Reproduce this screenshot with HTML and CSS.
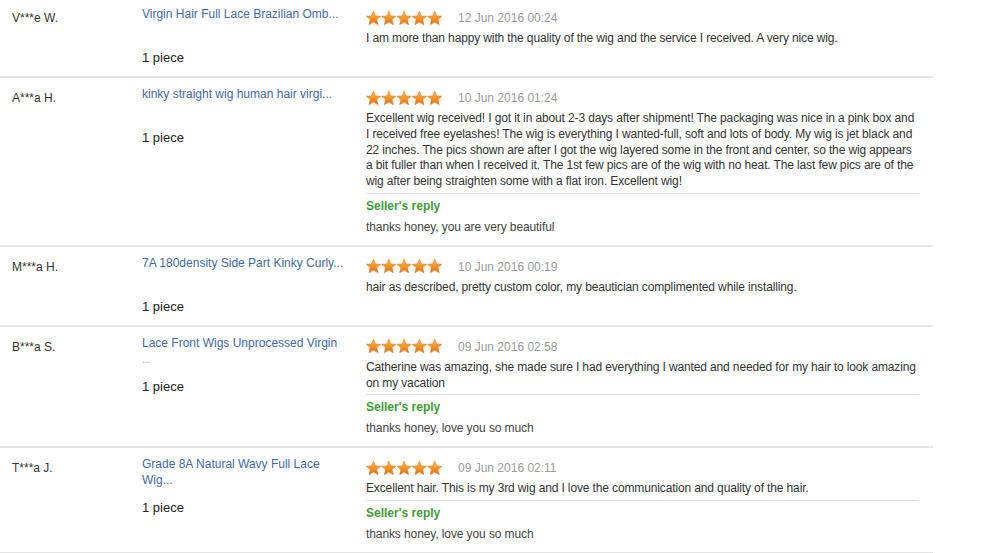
FILE: index.html
```html
<!DOCTYPE html>
<html>
<head>
<meta charset="utf-8">
<link rel="stylesheet" href="styles.css">
</head>
<body>
<svg class="defs" width="0" height="0" aria-hidden="true">
  <defs>
    <linearGradient id="sg" x1="0" y1="0" x2="0" y2="1">
      <stop offset="0" stop-color="#fdbb4e"/>
      <stop offset="0.55" stop-color="#f39227"/>
      <stop offset="1" stop-color="#e26c0e"/>
    </linearGradient>
    <polygon id="star" points="7.5,0 9.55,4.9 14.75,5.25 10.75,8.6 12,13.8 7.5,11.0 3,13.8 4.25,8.6 0.25,5.25 5.45,4.9" fill="url(#sg)" stroke="#d9731a" stroke-width="0.5" stroke-linejoin="round"/>
  </defs>
</svg>
<div class="list">

  <div class="row">
    <div class="name">V***e W.</div>
    <div class="prod">
      <a class="link" href="#">Virgin Hair Full Lace Brazilian Omb...</a>
      <div class="qty">1 piece</div>
    </div>
    <div class="review">
      <div class="meta">
        <svg class="stars" width="78" height="14" viewBox="0 0 78 14"><use href="#star" x="0"/><use href="#star" x="15.3"/><use href="#star" x="30.6"/><use href="#star" x="45.9"/><use href="#star" x="61.2"/></svg>
        <span class="date">12 Jun 2016 00:24</span>
      </div>
      <p class="text">I am more than happy with the quality of the wig and the service I received. A very nice wig.</p>
    </div>
  </div>

  <div class="row">
    <div class="name">A***a H.</div>
    <div class="prod">
      <a class="link" href="#">kinky straight wig human hair virgi...</a>
      <div class="qty">1 piece</div>
    </div>
    <div class="review">
      <div class="meta">
        <svg class="stars" width="78" height="14" viewBox="0 0 78 14"><use href="#star" x="0"/><use href="#star" x="15.3"/><use href="#star" x="30.6"/><use href="#star" x="45.9"/><use href="#star" x="61.2"/></svg>
        <span class="date">10 Jun 2016 01:24</span>
      </div>
      <p class="text">Excellent wig received! I got it in about 2-3 days after shipment! The packaging was nice in a pink box and I received free eyelashes! The wig is everything I wanted-full, soft and lots of body. My wig is jet black and 22 inches. The pics shown are after I got the wig layered some in the front and center, so the wig appears a bit fuller than when I received it. The 1st few pics are of the wig with no heat. The last few pics are of the wig after being straighten some with a flat iron. Excellent wig!</p>
      <div class="reply">
        <div class="reply-title">Seller's reply</div>
        <div class="reply-text">thanks honey, you are very beautiful</div>
      </div>
    </div>
  </div>

  <div class="row">
    <div class="name">M***a H.</div>
    <div class="prod">
      <a class="link" href="#">7A 180density Side Part Kinky Curly...</a>
      <div class="qty">1 piece</div>
    </div>
    <div class="review">
      <div class="meta">
        <svg class="stars" width="78" height="14" viewBox="0 0 78 14"><use href="#star" x="0"/><use href="#star" x="15.3"/><use href="#star" x="30.6"/><use href="#star" x="45.9"/><use href="#star" x="61.2"/></svg>
        <span class="date">10 Jun 2016 00:19</span>
      </div>
      <p class="text">hair as described, pretty custom color, my beautician complimented while installing.</p>
    </div>
  </div>

  <div class="row">
    <div class="name">B***a S.</div>
    <div class="prod">
      <a class="link" href="#">Lace Front Wigs Unprocessed Virgin<br><span class="dots">...</span></a>
      <div class="qty">1 piece</div>
    </div>
    <div class="review">
      <div class="meta">
        <svg class="stars" width="78" height="14" viewBox="0 0 78 14"><use href="#star" x="0"/><use href="#star" x="15.3"/><use href="#star" x="30.6"/><use href="#star" x="45.9"/><use href="#star" x="61.2"/></svg>
        <span class="date">09 Jun 2016 02:58</span>
      </div>
      <p class="text">Catherine was amazing, she made sure I had everything I wanted and needed for my hair to look amazing on my vacation</p>
      <div class="reply">
        <div class="reply-title">Seller's reply</div>
        <div class="reply-text">thanks honey, love you so much</div>
      </div>
    </div>
  </div>

  <div class="row">
    <div class="name">T***a J.</div>
    <div class="prod">
      <a class="link" href="#">Grade 8A Natural Wavy Full Lace<br>Wig...</a>
      <div class="qty">1 piece</div>
    </div>
    <div class="review">
      <div class="meta">
        <svg class="stars" width="78" height="14" viewBox="0 0 78 14"><use href="#star" x="0"/><use href="#star" x="15.3"/><use href="#star" x="30.6"/><use href="#star" x="45.9"/><use href="#star" x="61.2"/></svg>
        <span class="date">09 Jun 2016 02:11</span>
      </div>
      <p class="text">Excellent hair. This is my 3rd wig and I love the communication and quality of the hair.</p>
      <div class="reply">
        <div class="reply-title">Seller's reply</div>
        <div class="reply-text">thanks honey, love you so much</div>
      </div>
    </div>
  </div>

</div>
</body>
</html>
```

FILE: styles.css
```css
html, body {
  margin: 0;
  padding: 0;
  background: #ffffff;
}
body {
  font-family: "Liberation Sans", Arial, sans-serif;
  font-size: 12px;
  color: #333333;
  overflow: hidden;
}
.defs {
  position: absolute;
  width: 0;
  height: 0;
}
.list {
  width: 933px;
  margin-top: -2px;
}
.row {
  display: grid;
  grid-template-columns: 142px 224px 1fr;
  border-bottom: 2px solid #e4e4e4;
  padding: 12px 0 10px 0;
}
.name {
  padding-left: 12px;
  line-height: 16px;
  color: #333;
}
.prod {
  margin-top: -4px;
  padding-right: 18px;
}
.link {
  display: block;
  height: 32px;
  line-height: 16px;
  color: #3f6aa3;
  text-decoration: none;
}
.dots {
  color: #aaa;
  font-size: 10px;
}
.qty {
  margin-top: 12px;
  font-size: 13px;
  line-height: 16px;
  color: #222;
}
.review {
  padding-right: 14px;
}
.meta {
  display: flex;
  align-items: center;
  height: 16px;
}
.stars {
  display: block;
  margin-top: -1px;
}
.date {
  margin-left: 14px;
  color: #9a9a9a;
  line-height: 16px;
}
.text {
  margin: 5px 0 0 0;
  line-height: 15.75px;
  letter-spacing: -0.13px;
  color: #333;
}
.reply {
  margin-top: 3px;
  border-top: 1px solid #dedede;
  padding-top: 4px;
}
.reply-title {
  line-height: 16px;
  font-weight: bold;
  color: #3f9b38;
}
.reply-text {
  margin-top: 5px;
  line-height: 16px;
  letter-spacing: -0.1px;
  color: #444;
}
```
